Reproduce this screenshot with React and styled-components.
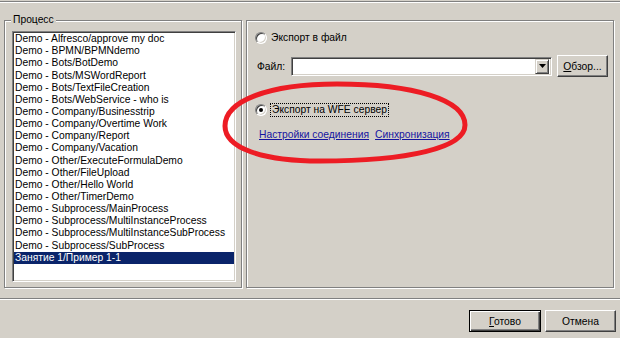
import React from "react";
import styled, { createGlobalStyle } from "styled-components";

const GlobalStyle = createGlobalStyle`
  html, body {
    margin: 0;
    padding: 0;
    background: #d4d0c8;
  }
  body {
    font-family: "Liberation Sans", Arial, sans-serif;
    font-size: 10.3px;
    color: #000;
  }
`;

const Window = styled.div`
  position: relative;
  width: 620px;
  height: 338px;
  overflow: hidden;
  background: #d4d0c8;
`;

const Etched = styled.div`
  margin-top: ${(p) => p.$top || 0}px;
  height: 0;
  border-top: 1px solid #808080;
  border-bottom: 1px solid #fff;
`;

const Panels = styled.div`
  display: flex;
  gap: 4px;
  margin-top: 17px;
  padding-left: 4px;
`;

const GroupBox = styled.div`
  position: relative;
  box-sizing: border-box;
  width: ${(p) => p.$width}px;
  height: 268px;
  padding: ${(p) => p.$padding || "0"};
  border: 1px solid #808080;
  box-shadow: inset 1px 1px 0 #fff, 1px 1px 0 #fff;
`;

const Legend = styled.span`
  position: absolute;
  top: -7px;
  left: 6px;
  padding: 0 2px;
  line-height: 12px;
  background: #d4d0c8;
`;

const ListBox = styled.div`
  box-sizing: border-box;
  width: 224px;
  height: 251px;
  overflow: hidden;
  background: #fff;
  border: 1px solid;
  border-color: #808080 #fff #fff #808080;
  box-shadow: inset 1px 1px 0 #404040, inset -1px -1px 0 #d4d0c8;
  padding: 1.2px 1px 1px 1px;
`;

const Item = styled.div`
  height: 12.15px;
  line-height: 12.15px;
  padding-left: 1px;
  white-space: nowrap;
  background: ${(p) => (p.$selected ? "#0a246a" : "transparent")};
  color: ${(p) => (p.$selected ? "#fff" : "#000")};
`;

const Row = styled.div`
  display: flex;
  align-items: center;
  height: ${(p) => p.$height}px;
  margin-top: ${(p) => p.$top}px;
  padding-left: ${(p) => p.$left}px;
  gap: ${(p) => p.$gap || 0}px;
`;

const Radio = styled.span`
  position: relative;
  box-sizing: border-box;
  width: 12px;
  height: 12px;
  flex: none;
  border-radius: 50%;
  background: #fff;
  border: 1px solid;
  border-color: #808080 #fff #fff #808080;
  box-shadow: inset 1px 1px 0 #404040, inset -1px -1px 0 #d4d0c8;
  &::after {
    content: "";
    display: ${(p) => (p.$checked ? "block" : "none")};
    position: absolute;
    left: 3px;
    top: 3px;
    width: 4px;
    height: 4px;
    border-radius: 50%;
    background: #000;
  }
`;

const Caption = styled.span`
  line-height: 12px;
  white-space: nowrap;
  padding: ${(p) => (p.$focused ? "0 1px" : "0")};
  border: ${(p) => (p.$focused ? "1px dotted #000" : "none")};
`;

const FieldLabel = styled.span`
  width: 34px;
  flex: none;
`;

const ComboBox = styled.div`
  box-sizing: border-box;
  display: flex;
  align-items: center;
  justify-content: flex-end;
  width: 261px;
  height: 19px;
  padding-right: 2px;
  background: #fff;
  border: 1px solid;
  border-color: #808080 #fff #fff #808080;
  box-shadow: inset 1px 1px 0 #404040, inset -1px -1px 0 #d4d0c8;
`;

const DropButton = styled.span`
  box-sizing: border-box;
  display: flex;
  align-items: center;
  justify-content: center;
  width: 14px;
  height: 15px;
  background: #d4d0c8;
  border: 1px solid;
  border-color: #d4d0c8 #404040 #404040 #d4d0c8;
  box-shadow: inset 1px 1px 0 #fff, inset -1px -1px 0 #808080;
`;

const Button = styled.button`
  box-sizing: border-box;
  width: ${(p) => p.$width}px;
  height: 22px;
  margin: 0;
  padding: 0;
  margin-left: ${(p) => p.$left || 0}px;
  font: inherit;
  color: #000;
  background: #d4d0c8;
  border: 1px solid;
  border-color: ${(p) =>
    p.$default ? "#000" : "#fff #404040 #404040 #fff"};
  box-shadow: ${(p) =>
    p.$default
      ? "inset 1px 1px 0 #fff, inset -1px -1px 0 #404040, inset -2px -2px 0 #808080"
      : "inset -1px -1px 0 #808080"};
  u {
    text-decoration: underline;
  }
`;

const Link = styled.span`
  color: #1414a0;
  text-decoration: underline;
  line-height: 12px;
  white-space: nowrap;
`;

const Footer = styled.div`
  display: flex;
  justify-content: flex-end;
  gap: 4px;
  padding: 10px 4px 0 0;
`;

const Overlay = styled.svg`
  position: absolute;
  left: 0;
  top: 0;
  pointer-events: none;
`;

const processes = [
  "Demo - Alfresco/approve my doc",
  "Demo - BPMN/BPMNdemo",
  "Demo - Bots/BotDemo",
  "Demo - Bots/MSWordReport",
  "Demo - Bots/TextFileCreation",
  "Demo - Bots/WebService - who is",
  "Demo - Company/Businesstrip",
  "Demo - Company/Overtime Work",
  "Demo - Company/Report",
  "Demo - Company/Vacation",
  "Demo - Other/ExecuteFormulaDemo",
  "Demo - Other/FileUpload",
  "Demo - Other/Hello World",
  "Demo - Other/TimerDemo",
  "Demo - Subprocess/MainProcess",
  "Demo - Subprocess/MultiInstanceProcess",
  "Demo - Subprocess/MultiInstanceSubProcess",
  "Demo - Subprocess/SubProcess",
  "Занятие 1/Пример 1-1",
];

export default function App() {
  const selected = processes.length - 1;

  return (
    <Window>
      <GlobalStyle />
      <Etched $top={1} />
      <Panels>
        <GroupBox $width={238} $padding="10px 5px 5px 7px">
          <Legend>Процесс</Legend>
          <ListBox>
            {processes.map((name, i) => (
              <Item key={name} $selected={i === selected}>
                {name}
              </Item>
            ))}
          </ListBox>
        </GroupBox>
        <GroupBox $width={368}>
          <Row $height={12} $top={11} $left={8} $gap={4}>
            <Radio />
            <Caption>Экспорт в файл</Caption>
          </Row>
          <Row $height={22} $top={11} $left={10}>
            <FieldLabel>Файл:</FieldLabel>
            <ComboBox>
              <DropButton>
                <svg width="7" height="4" viewBox="0 0 7 4">
                  <polygon points="0,0 7,0 3.5,4" fill="#000" />
                </svg>
              </DropButton>
            </ComboBox>
            <Button $width={51} $left={5}>
              <u>О</u>бзор...
            </Button>
          </Row>
          <Row $height={14} $top={26} $left={8} $gap={3}>
            <Radio $checked />
            <Caption $focused>Экспорт на WFE сервер</Caption>
          </Row>
          <Row $height={12} $top={12} $left={12} $gap={6}>
            <Link>Настройки соединения</Link>
            <Link>Синхронизация</Link>
          </Row>
        </GroupBox>
      </Panels>
      <Etched $top={10} />
      <Footer>
        <Button $width={72} $default>
          <u>Г</u>отово
        </Button>
        <Button $width={71}>Отмена</Button>
      </Footer>
      <Overlay width="620" height="338" viewBox="0 0 620 338">
        <path
          d="M 337 84 C 268 84, 225 101, 225 126 C 225 148, 262 161, 320 161 C 408 161, 465 148, 465 125 C 465 100, 414 84, 337 84 Z"
          fill="none"
          stroke="#ed1c24"
          strokeWidth="5"
        />
      </Overlay>
    </Window>
  );
}
